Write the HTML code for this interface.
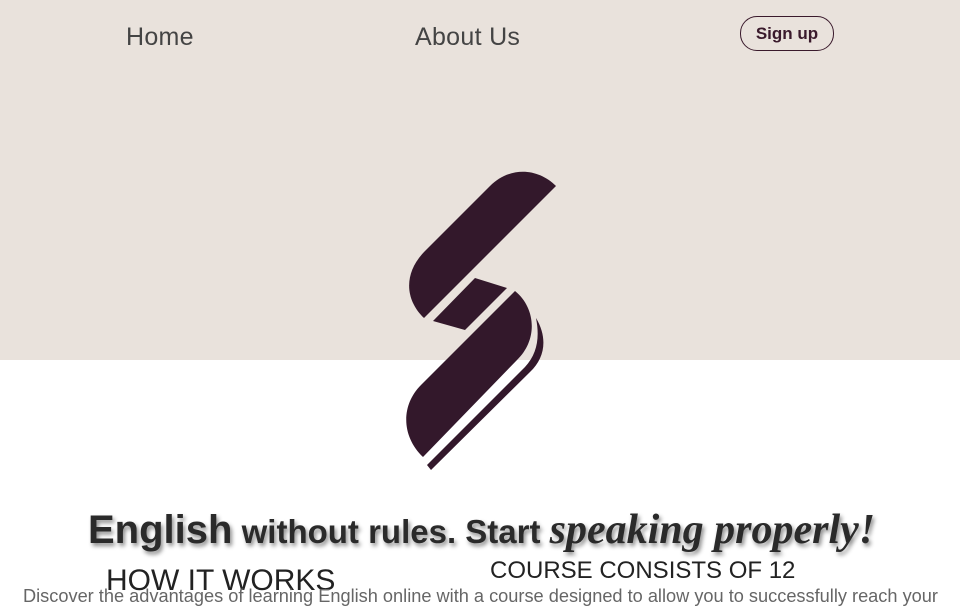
<!DOCTYPE html>
<html><head><style>
html,body{margin:0;padding:0}
body{width:960px;height:600px;overflow:hidden;background:#fff;position:relative;font-family:"Liberation Sans",sans-serif}
.top{position:absolute;left:0;top:0;width:960px;height:360px;background:#e9e2dc}
.nav{position:absolute;top:23px;font-size:25px;color:#444;font-weight:normal;letter-spacing:0.3px}
.btn{position:absolute;left:740px;top:16px;width:92px;height:33px;border:1px solid #3a1a2c;border-radius:17px;text-align:center;line-height:33px;font-size:17px;font-weight:bold;color:#3a1a2c}
svg{position:absolute;left:0;top:0}
.h1{position:absolute;left:88px;top:506px;white-space:nowrap;color:#2a2a2a;font-weight:bold;text-shadow:2px 3px 4px rgba(0,0,0,.45)}
.h2{position:absolute;font-size:27px;color:#222;white-space:nowrap}
.p{position:absolute;left:23px;top:586px;font-size:18.2px;color:#666;white-space:nowrap}
</style></head><body>
<div class="top"></div>
<div class="nav" style="left:126px">Home</div>
<div class="nav" style="left:415px">About Us</div>
<div class="btn">Sign up</div>
<svg width="960" height="600">
<g fill="#33182b">
<path d="M556,186 C538,168 510,166 490,186 L425,251 C403,273 405,300 424,318 Z"/>
<path d="M475,278 L507,288 L465,330 L433,321 Z"/>
<path d="M515,291 C536,308 538,340 517,360 L423,457 C401,436 401,405 421,385 Z"/>
<path d="M536,318 C548,338 545,358 530,372 L431,470 L427,465 L525,367 C537,354 540,338 536,318 Z"/>
</g>
</svg>
<div class="h1"><span style="font-size:40px">English</span><span style="font-size:33px"> without rules. Start </span><span style="font-size:42px;font-family:'Liberation Serif',serif;font-style:italic">speaking properly!</span></div>
<div class="h2" style="left:490px;top:557px;font-size:24px">COURSE CONSISTS OF 12</div>
<div class="h2" style="left:106px;top:564px;font-size:30px">HOW IT WORKS</div>
<div class="p">Discover the advantages of learning English online with a course designed to allow you to successfully reach your</div>
</body></html>
